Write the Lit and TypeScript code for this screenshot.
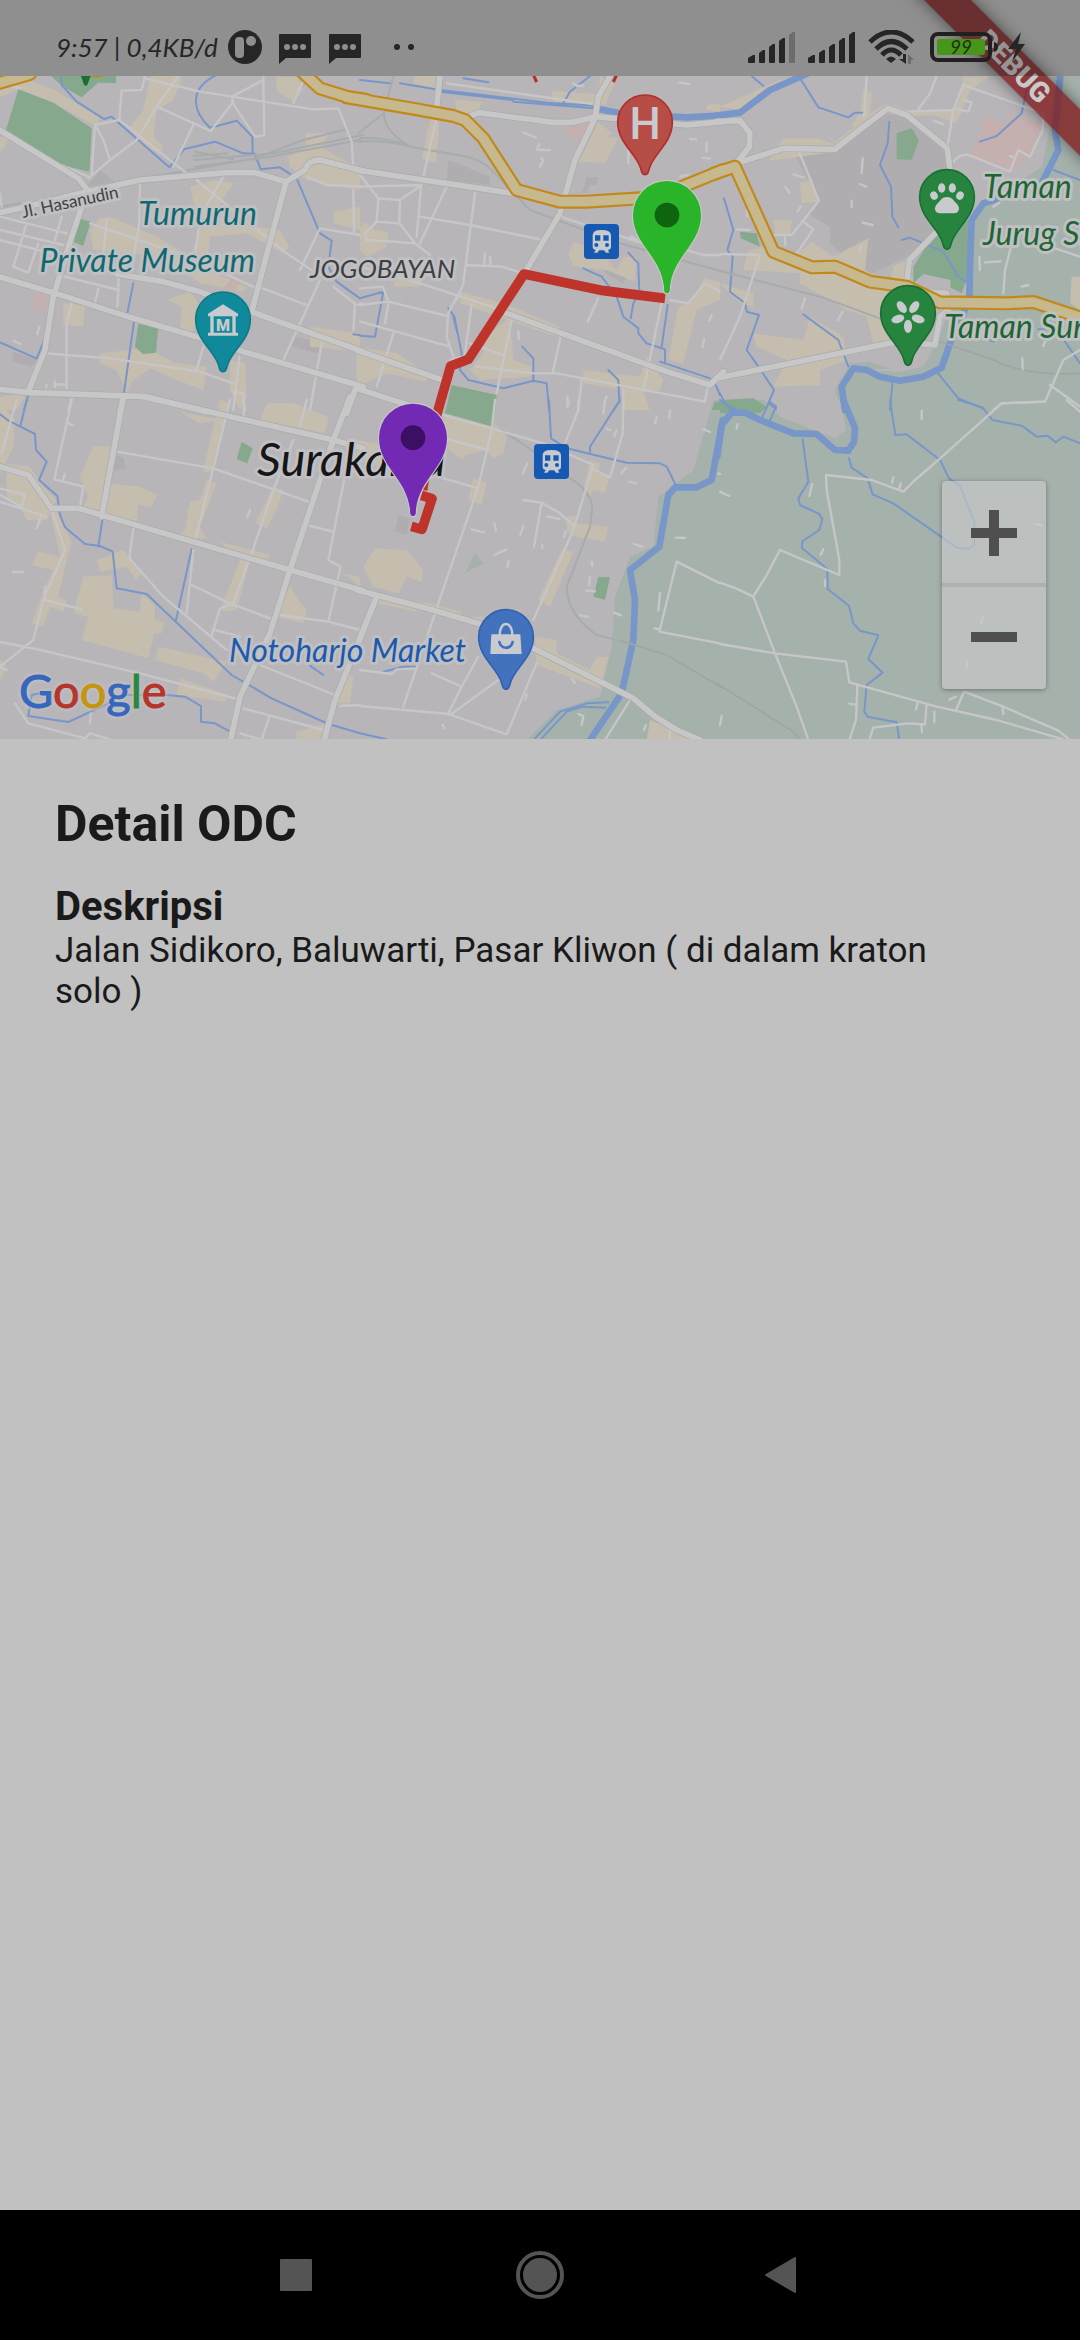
import { LitElement, html, svg, css } from "lit";
import { customElement } from "lit/decorators.js";

type LayerName =
  | "wetland" | "land" | "works" | "built" | "health" | "park"
  | "stream" | "river" | "rail" | "boundary" | "minor" | "major" | "highway";

interface Tile {
  x: number;
  y: number;
  paths: Partial<Record<LayerName, string>>;
}

/* Geometry is stored per tile, in tile units; three units make one map pixel. */
const TILES: Tile[] = [
  {
    x: 0, y: 0,
    paths: {
      works: "M300 300L345 335L260 350Z M40 845L110 870L95 890L38 875Z M880 800L965 815L955 850L875 830Z",
      built:
        "M-10 40L60 22L165 60L300 145L290 170L165 100L60 58L-10 85Z M0 200L35 195L0 250Z M450 18L550 18L520 90L470 120L460 200L490 230L480 255L410 210L390 170L430 120Z M300 445L330 440L470 500L570 560L600 480L570 350L640 330L700 340L660 400L700 460L840 480L868 530L850 550L740 490L630 500L620 600L740 650L730 665L600 640L500 560L280 540L270 480Z M865 260L920 230L915 190L990 190L960 230L1030 270L1080 290L1080 360L920 330L870 290Z M830 20L890 20L910 60L880 95L830 60Z M1000 425L1080 410L1080 480L1000 460Z M190 700L255 705L250 770L190 765Z M500 690L570 665L610 720L570 800L540 780L545 710Z M300 850L440 835L530 880L620 890L610 960L530 930L450 895L400 930L380 970L350 900L300 880Z M690 870L735 880L740 980L720 1020L690 960Z M930 770L1080 790L1080 845L930 830Z M0 980L80 970L50 1020L0 1020Z",
      health: "M105 665L145 680L140 725L103 715Z M690 630L715 620L720 640L700 670L670 655Z",
      park: "M55 58L160 98L275 175L268 305L185 285L18 180Z M153 18L348 18L348 40L295 38L245 82L190 50Z M235 445L272 455L250 527L217 515Z M415 762L475 772L468 848L428 852L405 830Z",
      stream:
        "M182 18L185 45L230 95L312 147L335 140L508 292L552 238L645 215L730 250L765 252L782 298L840 292L890 325L960 490L995 512L985 590L1010 635L1080 685 M660 10Q590 40 588 90Q585 130 630 173L710 152L757 200L758 252 M400 640L380 740L402 755L372 968 M-5 815L110 866L132 812 M85 975L72 1020 M1060 793L1080 795",
      rail: "M430 325L765 265L910 210L1040 178 M585 270L820 250L1090 195 M585 245L700 268 M585 290L800 262L1080 210 M580 258L680 250 M-10 412L60 400",
      minor:
        "M435 18L425 60L365 62L358 150L560 310 M535 18L470 110L410 210L330 270L265 325 M-5 35L60 55 M435 25L600 65L940 118L1015 115L1055 215L1060 290 M285 165L358 150 M285 165L275 310 M285 165L310 210L330 270 M185 285L265 320 M790 18L793 195L765 200L695 95 M790 30L695 80L700 95L632 183L470 110 M580 165L520 290 M915 18L880 100 M420 345L418 460L395 600 M320 450L310 550 M270 460L520 545L650 600L770 655 M590 330L650 380L860 550L935 600 M670 320L600 440L580 600 M0 440L200 490 M0 480L190 525 M0 510L190 560 M80 460L40 590L85 608L115 520 M185 440L165 510 M175 615L355 660L355 620 M295 655L285 700 M355 660L352 710 M780 652L920 705 M960 630L850 870 M960 475L900 600 M960 475L1080 495 M1060 360L1062 490 M920 320L980 345L1080 350 M215 700L200 760L200 955 M140 850L330 865L600 905L700 940 M610 830L590 900 M718 860L700 1020 M700 965L730 970L735 1020 M215 985L205 1020 M1065 700L1060 780 M965 820L930 1020 M1000 650L1070 705L1085 700 M118 770L112 792 M40 812L62 822 M140 945L138 952 M165 935L165 952 M165 943L195 943 M0 370L5 410",
      major:
        "M-10 175L235 325L262 360 M-10 430L100 405L260 365L420 330L680 308L765 308L858 335L915 300Q925 270 960 270L1090 303 M858 335L755 725 M262 360L215 500L160 680L135 840L85 965 M-10 618L160 668L390 742L590 800L730 845L1090 950 M350 612L490 635L600 665L780 735L1090 845 M-10 957L90 968L440 980L620 1025 M370 985L360 1025 M1065 960L1040 1030",
      highway: "M-20 44L90 12 M900 0L960 55L1040 80L1100 90",
    },
  },
  {
    x: 1080, y: 0,
    paths: {
      works: "M265 270L390 320L390 345L260 330Z M680 320L715 322L710 345L690 345L680 370L665 368Z M740 590L800 620L790 640L735 610Z",
      built:
        "M165 18L230 18L225 55L160 40Z M285 90L365 95L355 125L330 145L290 120Z M215 130L240 140L228 280L185 265Z M575 62L740 75L740 105L580 95Z M720 18L765 40L740 95L715 95Z M715 155L755 190L740 200L775 205L735 280L690 275L655 280Z M640 515L720 545L770 600L790 560L830 560L825 635L740 600L640 590L625 550Z M1030 625L1080 635L1080 690L1010 720L970 880L925 870L955 710L1000 690Z M15 455L45 480L85 485L80 530L20 560L0 540L0 470Z M120 600L190 620L180 650L100 650Z M300 665L430 700L600 770L590 800L300 700Z M380 800L450 740L460 870L520 890L510 920L360 930L330 900L370 850Z M-10 830L110 850L205 910L200 935L80 910L-10 950Z M670 900L840 920L860 860L910 930L900 960L850 965L870 1020L790 1020L790 960L670 940Z M1040 105L1080 100L1080 125L1040 120Z",
      health: "M690 155L660 215L610 190L640 160Z",
      park: "M275 945L410 975L400 1070L255 1030Z M1065 995L1080 995L1080 1020L1055 1020Z",
      stream:
        "M0 30L90 40 M690 18L630 65L610 100 M310 25L385 37 M805 548L835 580L838 670L820 700L812 745 M670 595L725 620L770 680L790 740L835 775L835 790L860 820L915 838L915 880 M923 705L905 830 M0 685L70 665L45 800L0 797 M265 715L283 740L305 850L300 900L325 930L430 955L520 932L560 940L567 1020 M487 830L520 865L520 935 M745 900L775 930L778 995L760 1020 M1050 925L900 875 M1065 940L1080 975 M280 740L292 790 M120 40L240 60L560 98L720 108 M460 95L740 118 M240 65L460 90",
      river: "M720 118L790 132L980 142L1080 137",
      rail: "M100 18L72 130Q70 180 150 230 M72 130L-5 190 M0 205Q80 200 150 230L330 262Q370 275 390 295L510 420L660 475L780 520L1090 605 M-5 215Q80 210 150 230",
      minor:
        "M235 120L190 320 M260 40L580 85L720 105 M0 315L55 385L120 390L185 345L0 350 M55 390L50 455L15 490L20 510L100 515L165 520L210 555 M120 390L118 460L50 455 M118 460L165 520 M183 350L170 500 M180 440L330 465L540 508 M345 370L310 640L290 690 M260 350L180 520 M320 585L425 590L490 610 M0 590L180 640L440 725 M290 680L265 730L260 800L280 860 M70 655L85 695L0 705 M85 695L262 738 M85 700L75 760 M0 755L270 830 M100 790L50 950 M335 700L315 850 M330 820L430 855 M270 870L340 850 M455 750L410 970 M350 890L520 910L590 910L800 950L1035 995L1045 940 M603 795L578 910 M665 930L655 1020 M790 960L790 1020 M715 685L683 755 M905 700L850 960 M930 690L985 700L1035 640L1080 665 M600 440L850 520 M980 540L1030 555L1080 555 M375 550L372 585 M390 560L392 585 M0 655L70 650 M490 188L528 203 M538 222L530 238L550 240L570 240 M545 265L550 270L540 290 M805 240L805 280 M990 207L1008 208 M1040 218L1040 245 M1028 263L1050 266 M960 320L985 314 M958 38L988 42 M640 40L650 48L670 46 M475 785L477 808 M1055 735L1048 752 M1032 808L1028 832 M622 980L622 1010 M740 980L732 1000 M805 510L812 500L830 508",
      major:
        "M243 -10L230 110 M760 0L715 80L705 145L645 270L600 430L490 615 M325 140L355 128L580 157L640 157L705 140L980 165L1090 155 M-10 300L460 370 M440 730L920 905L1050 945L1090 905 M-10 840L260 935 M-10 955L190 1020",
      highway: "M-40 82L170 118L280 138L315 150L370 205L470 360L600 395L680 395L840 385L900 378L980 345L1090 300",
    },
  },
  {
    x: 2160, y: 0,
    paths: {
      wetland: "M1005 18L1080 18L1080 1020L360 1020L345 960L390 880L450 875L540 905L610 890L660 800L690 700L740 680L750 590L760 420L800 400L965 290L985 200Z",
      works: "M220 250L350 240L480 120L560 130L690 240L700 300L660 480L560 560L500 590L440 620L330 520L330 470L260 430L300 390Z",
      built:
        "M0 110L90 70L180 30L240 18L150 55L60 120Z M430 55L455 70L450 130L500 100L560 120L700 120L720 90L730 20L810 18L750 60L710 160L640 135L560 140L500 130L430 165L390 170L420 130Z M150 265L190 205L290 205L350 225L320 195L345 215L430 150L350 245L150 272Z M240 340L270 330L300 395L245 400Z M160 450L215 450L210 495L165 490Z M85 540L130 530L220 560L275 515L340 560L445 505L435 600L510 640L520 590L560 570L580 640L520 670L520 810L460 820L440 740L380 720L240 640L240 610L70 600Z M0 640L100 670L100 710L60 700Z M100 790L250 810L270 740L370 800L380 870L300 900L300 945L160 950L200 870L110 830Z M1055 620L1080 620L1080 720L1050 700Z",
      health: "M785 150L800 140L860 160L865 130L970 160L950 200L930 260L860 310L750 250L780 200Z",
      park: "M530 190L575 175L597 210L575 270L530 268Z M60 485L110 490L120 530L62 505Z M580 590L650 480L745 450L750 600L725 670L610 612L580 640Z M0 990L100 985L140 1010L120 1030L0 1030Z",
      land: "M610 612L692 630L690 665L605 645Z M400 900L540 895L640 800L620 840L600 890L540 905Z",
      stream:
        "M95 18L130 48 M240 25L295 112L385 142L405 128L430 128 M508 155L503 220L480 285L513 350L517 440L535 472 M780 215L830 198L905 130L920 60 M545 510L570 503L670 545L715 620L745 640 M12 385L40 480L22 540L38 560L30 665L75 700L80 725L117 735L80 840L115 890L162 960L145 1000L168 1018 M250 733L355 810L385 890 M650 905L715 985L790 1015 M517 940L510 1020 M1035 815L1080 880 M1000 300L1080 330 M0 970L15 1000L50 1020 M800 805L820 815 M955 778L975 778",
      river: "M-10 137L60 128L150 60L260 12 M1022 10L1005 180L1015 240L985 300 L965 340L790 400L755 450L750 590L748 680L720 760L690 820L665 893L610 920L540 932L480 920L440 900L400 895L365 950L375 1020",
      rail: "M-10 600L300 680L480 745",
      boundary: "M660 815L820 870Q920 920 1090 910",
      minor:
        "M650 18L630 70L590 125 M440 18L432 140 M560 125L700 120L730 45L970 130L968 180L930 260L895 240L870 305L760 260Q720 240 690 290 M735 90L755 98L745 125L700 115 M700 120L682 230 M235 240L297 392L215 495L150 495 M250 455L280 478L230 550 M0 552L120 555L60 740L0 870 M873 530L855 600L850 670 M990 530L1080 560 M1080 840L1030 870L975 995L845 1000L820 1020 M990 945L1080 1010 M778 560L780 600 M795 577L842 574 M428 265L425 310 M420 342L438 350 M395 392L395 410 M428 458L458 465 M220 313L250 322 M196 350L208 368 M242 410L233 424 M640 152L670 162 M255 685L245 715 M368 725L353 750 M905 650L925 645 M907 865L908 898 M970 828L975 815 M820 410L838 398 M424 530L418 548 M870 258L880 262 M50 478L90 480 M80 420L82 440 M195 500L196 525",
      major:
        "M-10 155L60 152L90 190L88 230L50 280L190 235L345 238L430 170L505 115L560 135L682 235L690 300 M650 485L568 570L560 640 M-10 925L530 815 M600 665L680 670L685 720L660 740L645 825L600 820",
      highway: "M-20 312L45 290L160 545L275 592L345 590L450 635L560 650L660 697L860 700L940 696L1090 745",
    },
  },
  {
    x: 0, y: 990,
    paths: {
      works: "M350 165L372 175L375 205L340 212Z",
      built:
        "M0 10L45 60L40 140L0 220Z M20 190L90 200L130 260L170 300L140 360L80 360L60 320L20 300Z M150 330L180 340L215 430L200 480L175 590L200 600L190 635L150 620L130 680L95 670L135 560L160 510L95 495L115 455L180 470Z M280 137L330 140L320 250L420 260L472 285L455 320L415 315L410 365L240 340L265 290L240 230Z M290 480L370 450L425 520L410 540L380 500L300 515Z M250 530L335 525L340 625L420 635L425 580L465 615L465 660L493 665L485 700L462 700L445 775L245 720L265 650L220 640Z M475 740L680 785L640 845L610 820L465 780Z M540 835L685 885L675 905L530 885Z M660 0L690 10L640 220L610 215L630 120Z M620 240L650 250L600 380L620 415L510 420L555 390L570 305L600 300Z M800 10L880 10L985 50L975 100L780 60Z M820 260L850 270L830 330L800 385L765 370Z M660 425L810 465L800 485L750 480L710 630L670 635L665 620L720 480Z M870 555L895 600L920 630L910 670L830 650Z M1040 820L1060 830L1050 910L1000 910Z M890 995L980 970L960 1020L890 1020Z M1080 530L1030 520L1080 560Z M540 35L660 60L600 70Z M0 780L15 790L10 830L0 840Z",
      park: "M725 125L758 145L742 190L710 178Z",
      stream:
        "M80 0L62 75 M-10 35L25 62L62 80L105 102L108 150L140 185L117 240L172 288L180 345L195 382L255 432L300 438L338 455L350 565L440 582L695 825L815 895L985 972L1080 1000 M307 360L295 440 M575 447L527 665 M120 880L95 885L85 948L205 966L380 885L500 885L555 890L603 918L603 965L645 970L690 995 M930 797L970 825",
      minor:
        "M215 0L200 70L163 238L250 260L240 320 M200 68L218 76 M195 222L187 245 M0 265L75 285L65 320L0 285 M0 305L140 350L125 345L110 385 M50 0L5 160 M155 330L195 450L130 600L100 720L0 800L20 810 M135 560L135 600L245 628 M-5 725L100 745L420 820L705 895 M350 155L640 205L925 305 M690 0L640 205L588 410 M730 0L732 50 M920 0L900 80 M880 120L820 270L755 460 M745 485L700 610L660 625L635 705 M400 385L388 475L490 590L680 750 M580 450L560 640 M575 555L690 610L810 655 M645 690L720 710 M1040 200L985 480L1022 500L985 665 M930 378L1000 395 M840 645L985 665L1080 690 M780 795L1005 885 M730 925L970 990 M808 950L785 1020 M45 910L85 970L255 1015L270 1000L330 1018 M272 940L270 970 M38 516L68 516 M750 330L742 352 M720 1000L780 1018 M1020 918L1080 915",
      major:
        "M370 -10L305 350 M430 -10L990 118L1090 145 M-10 197L85 225L155 325L235 325L870 510L1090 572 M1050 -10L1000 120L870 510L810 700L720 890L690 1030 M1130 590L1070 740L1005 900L970 1030",
    },
  },
  {
    x: 1080, y: 990,
    paths: {
      wetland: "M1060 0L1080 0L1080 1020L500 1020L590 930L720 890L755 740L765 590L810 470L880 440L895 290L950 250L1000 210Z M345 460L372 490L315 520Z",
      works: "M115 345L150 355L140 405L105 395Z",
      built:
        "M250 40L395 80L400 65L440 110L430 160L400 175L380 150L315 165L310 180L265 150Z M340 235L380 248L365 315L325 300Z M45 445L140 450L190 510L185 545L140 530L115 580L40 560L10 500Z M190 605L305 635L300 650L190 625Z M330 650L400 650L380 670Z M690 180L720 190L715 220L750 225L735 280L700 270L690 290L670 270Z M620 350L650 345L650 370L745 380L735 425L650 410L620 395Z M605 450L640 455L570 620L535 600Z M525 710L590 720L590 760L690 810L710 770L745 770L720 865L530 795Z M870 960L1000 1010L1020 1030L860 1020Z M-10 120L100 140L50 200L-10 160Z M50 590L170 620L170 635L50 610Z",
      park: "M715 530L750 532L735 600L700 590Z",
      stream:
        "M567 0L573 115L620 145L800 188L900 190L920 200L947 255 M780 0L690 140L690 155 M70 815L130 800L170 800 M525 1015L600 935L680 910L745 907 M545 1015L620 935L670 920L735 923 M0 1000L80 1018",
      river: "M1088 60L1055 240L1010 262L945 262L925 285L898 440L810 510L825 600L820 720L785 880L690 1020",
      rail: "M430 95Q520 150 630 235Q690 270 697 320L690 380L620 560Q620 640 710 705L780 722",
      boundary: "M780 722L920 765L1090 865",
      minor:
        "M405 0L395 90L355 260L235 610L205 700L130 920 M250 45L550 130L700 195L695 210L640 390L520 660 M790 0L788 100L750 232L705 210 M655 0L655 30L615 130 M250 115L385 150 M250 235L355 265 M490 300L545 308L600 340L640 375 M545 308L522 440 M355 770L305 860L265 940 M0 918L265 942L440 1003L530 790 M415 840L270 945 M215 820L305 860 M0 810L95 822L110 808L170 805 M810 900L735 1020 M1080 550L950 485L898 695L1080 730 M900 578L895 632 M883 685L900 688 M335 388L372 397 M403 370L408 392 M490 378L481 405 M402 465L440 448 M446 484L442 502 M560 349L598 357 M502 190L489 220 M625 0L625 18 M735 0L730 40 M740 86L752 90 M770 90L763 108 M890 52L885 70 M930 30L928 55 M1030 88L1050 96 M808 245L828 250 M798 203L785 220 M695 485L697 498 M690 530L687 555 M678 571L705 574 M660 646L683 650 M762 638L783 646 M948 413L975 414 M822 432L848 440 M617 395L612 410 M500 882L496 898 M655 942L670 948L665 975 M858 975L852 990 M930 990L928 1015 M248 975L254 985 M637 838L645 848 M547 435L547 443 M1075 220L1080 222",
      major: "M-10 570L200 625L440 695L520 745L820 895L885 950L950 990L1020 1020 M50 590L-10 740",
    },
  },
  {
    x: 2160, y: 990,
    paths: {
      wetland: "M-10 0H1080V1020H-10Z",
      land: "M130 0L360 0L378 90L345 115L180 50Z",
      stream:
        "M0 0L45 38 M125 55L148 5L168 20L148 65 M248 118L265 245L235 295L240 315L298 342L307 358L298 390L248 423L245 443L322 507L323 567L387 617L400 670L420 692L475 706L445 777L488 818L440 855L433 935L443 950L530 967L538 1020 M387 175L395 203L443 235L458 283L520 310L710 443L745 447L763 435L763 365L720 258L687 235L660 180L560 103L526 105L510 0 M715 0L787 22L817 60L905 77L950 110L982 107L1008 127L1030 110L1080 130",
      river: "M-8 170L5 75L35 38L75 38L120 60L220 100L290 102L345 150L385 152L402 125L405 85L370 0",
      boundary: "M-10 850L220 995L240 1020",
      minor:
        "M975 5L845 10L655 180L585 240L550 275L455 240L318 225L320 270L340 380L358 480L358 525L180 450L140 525L100 590L48 565L0 548 M100 590L165 760L230 920L265 1020 M0 732L165 760L378 785L388 847L650 920L830 960L1030 1018 M412 857L408 960L388 1020 M620 912L615 973L565 970L460 983L448 1020 M708 930L732 875L850 920L1015 992L1050 1020 M1040 0L1080 35 M605 33L605 58 M520 232L516 248 M542 250L538 266 M276 253L268 288 M310 448L302 465 M315 540L315 558 M0 275L28 288 M53 72L50 85 M388 911L405 914 M593 908L588 928 M643 935L643 967 M604 978L606 996 M688 899L708 890 M848 925L850 942 M948 372L965 377 M788 653L782 672 M740 785L740 803 M5 948L0 975",
    },
  },
];

const PAINT: { from: LayerName; cls: string }[] = [
  { from: "wetland", cls: "wetland" },
  { from: "works", cls: "works" },
  { from: "built", cls: "built" },
  { from: "health", cls: "health" },
  { from: "park", cls: "park" },
  { from: "land", cls: "land" },
  { from: "stream", cls: "stream" },
  { from: "river", cls: "river" },
  { from: "rail", cls: "rail" },
  { from: "boundary", cls: "boundary" },
  { from: "minor", cls: "minor" },
  { from: "major", cls: "major-edge" },
  { from: "major", cls: "major" },
  { from: "highway", cls: "highway-edge" },
  { from: "highway", cls: "highway" },
];

const ROUTE =
  "M1995 685L1810 662L1572 612L1405 868L1352 888L1290 1105L1268 1260M1264 1276L1296 1286L1266 1378L1234 1369";

const POI_PIN =
  "M0 157C-8 157-10 150-13 138C-24 95-82 62-82 0A82 82 0 1 1 82 0C82 62 24 95 13 138C10 150 8 157 0 157Z";
const MARKER =
  "M0 235C-8 235-9 228-9 214C-20 120-102 88-102 0A102 102 0 1 1 102 0C102 88 20 120 9 214C9 228 8 235 0 235Z";

const station = (x: number, y: number) => svg`
  <g transform="translate(${x} ${y})">
    <rect width="105" height="105" rx="12" class="station"></rect>
    <path class="pale" d="M26 34Q26 18 52 18Q81 18 81 34V68Q81 76 72 78L76 86H66L60 79H46L40 86H30L35 78Q26 76 26 68Z"></path>
    <path class="station" d="M33 34H49V50H33Z M58 34H74V50H58Z"></path>
    <circle class="station" cx="37" cy="63" r="6"></circle>
    <circle class="station" cx="69" cy="63" r="6"></circle>
  </g>`;

@customElement("city-map")
export class CityMap extends LitElement {
  static styles = css`
    :host { display: block; position: relative; overflow: hidden; }
    .canvas { display: block; width: 100%; aspect-ratio: 1080 / 663; background: #b8b5b9; }
    .wetland { fill: #a5b2ab; }
    .land { fill: #b8b5b9; }
    .works { fill: #b0adb1; }
    .built { fill: #c5bdae; }
    .health { fill: #c4b0ae; }
    .park { fill: #86a98e; }
    .stream, .river, .rail, .boundary, .minor, .major, .major-edge, .highway, .highway-edge, .route {
      fill: none; stroke-linejoin: round; stroke-linecap: round;
    }
    .stream { stroke: #7896c8; stroke-width: 6; }
    .river { stroke: #7896c8; stroke-width: 20; }
    .rail { stroke: #a6abac; stroke-width: 6; }
    .boundary { stroke: #a0a4a5; stroke-width: 5; }
    .minor { stroke: #c6c6c8; stroke-width: 7; }
    .major-edge { stroke: #a9aaac; stroke-width: 21; }
    .major { stroke: #c7c7c7; stroke-width: 17; }
    .highway-edge { stroke: #c1891a; stroke-width: 42; }
    .highway { stroke: #c6b88f; stroke-width: 29; }
    .route { stroke: #be342a; stroke-width: 29; stroke-linecap: butt; }
    .station { fill: #1659b3; }
    .pale { fill: #c8cace; }
    .pale-line { fill: none; stroke: #c8cace; stroke-width: 7; }
    .pin { stroke-width: 5; }
    .museum { fill: #108a9b; stroke: #0e7a86; }
    .hospital { fill: #b64d47; stroke: #ae3028; }
    .garden { fill: #27843f; stroke: #1a7033; }
    .shop { fill: #4272bd; stroke: #2f62b2; }
    .shop-line { fill: none; stroke: #4272bd; stroke-width: 8; stroke-linecap: round; }
    .marker { stroke: #c4c8c4; stroke-width: 7; paint-order: stroke; }
    .start { fill: #2ab42a; }
    .start-dot { fill: #0f640f; }
    .end { fill: #7229b4; }
    .end-dot { fill: #3c0f64; }
    .label {
      font-family: Lato, "Open Sans", sans-serif; font-style: italic; font-size: 32px;
      paint-order: stroke; stroke: #c0bfc2; stroke-width: 6px; stroke-linejoin: round;
    }
    .teal { fill: #10686f; }
    .green { fill: #1b6633; }
    .blue { fill: #1b5aae; }
    .district { fill: #3c3f44; font-size: 26px; }
    .city { fill: #161618; font-size: 47px; }
    .street { fill: #3c3f44; font-size: 17px; font-style: normal; }
    .sign { font-family: Roboto, sans-serif; font-weight: 500; font-size: 44px; fill: #c8cace; text-anchor: middle; }
    .sign-small { font-size: 16px; font-weight: 900; }
    .brand {
      position: absolute; left: 19px; bottom: 21px; font-family: Lato, sans-serif; font-size: 47px; line-height: 56px;
      -webkit-text-stroke: 1px currentColor; color: #3567bd; text-decoration: none;
      text-shadow: 0 0 4px #c2c1c4, 0 0 4px #c2c1c4, 0 0 6px #c2c1c4;
    }
    .red { color: #b5352c; }
    .yellow { color: #c4960f; }
    .leaf { color: #27883f; }
    .zoom {
      position: absolute; right: 34px; bottom: 50px; width: 104px; display: flex; flex-direction: column;
      border-radius: 4px; overflow: hidden; box-shadow: 0 1px 5px rgba(0, 0, 0, 0.35);
    }
    .step {
      height: 104px; padding: 0; border: 0; display: flex; align-items: center; justify-content: center;
      background: rgba(201, 202, 204, 0.62); color: #4f4f4f; box-shadow: inset 0 -2px #aeb1b0;
    }
    .step + .step { box-shadow: inset 0 2px #aeb1b0; }
  `;

  render() {
    return html`
      <svg class="canvas" viewBox="0 0 1080 663" preserveAspectRatio="xMidYMid slice" role="img" aria-label="Surakarta">
        <g transform="translate(0 -6) scale(0.333333)">
          ${PAINT.map((layer) =>
            TILES.filter((t) => t.paths[layer.from]).map(
              (t) => svg`<path class=${layer.cls} transform="translate(${t.x} ${t.y})" d=${t.paths[layer.from]!}></path>`
            )
          )}
          <path d="M1598 10L1610 36M1852 10L1840 36" stroke="#ae3028" stroke-width="9"></path>
          <ellipse cx="290" cy="14" rx="24" ry="9" fill="#c1891a"></ellipse>
          <path d="M240 10H275L262 44Q257 50 252 44Z" fill="#1a7033"></path>
        </g>

        <text class="label street" transform="translate(23 142) rotate(-12)">Jl. Hasanudin</text>
        <text class="label teal" x="257" y="149" text-anchor="end">Tumurun</text>
        <text class="label teal" x="255" y="196" text-anchor="end">Private Museum</text>
        <text class="label district" x="310" y="202">JOGOBAYAN</text>
        <text class="label city" x="257" y="400">Surakarta</text>
        <text class="label blue" x="229" y="586">Notoharjo Market</text>
        <text class="label green" x="983" y="122">Taman</text>
        <text class="label green" x="983" y="169">Jurug Su</text>
        <text class="label green" x="944" y="262">Taman Sur</text>

        <g transform="translate(0 -6) scale(0.333333)">
          ${station(1752, 462)} ${station(1602, 1122)}
          <path class="route" d=${ROUTE}></path>

          <g transform="translate(669 748)">
            <path class="pin museum" d=${POI_PIN}></path>
            <path class="pale" d="M0 -45L45 -17V-9H-45V-17Z M-38 -9H-28V42H-38Z M28 -9H38V42H28Z M-45 40H45V49H-45Z"></path>
          </g>
          <g transform="translate(1935 157)"><path class="pin hospital" d=${POI_PIN}></path></g>
          <g transform="translate(2841 381)">
            <path class="pin garden" d=${POI_PIN}></path>
            <ellipse class="pale" cx="-39" cy="-4" rx="11" ry="13" transform="rotate(-25 -39 -4)"></ellipse>
            <ellipse class="pale" cx="-16" cy="-27" rx="11" ry="14"></ellipse>
            <ellipse class="pale" cx="16" cy="-27" rx="11" ry="14"></ellipse>
            <ellipse class="pale" cx="39" cy="-4" rx="11" ry="13" transform="rotate(25 39 -4)"></ellipse>
            <path class="pale" d="M0 0C16 0 18 10 28 19C42 32 36 49 22 49H-22C-36 49 -42 32 -28 19C-18 10 -16 0 0 0Z"></path>
          </g>
          <g transform="translate(2724 729)">
            <path class="pin garden" d=${POI_PIN}></path>
            ${[36, 108, 180, 252, 324].map(
              (a) => svg`<ellipse class="pale" cx="0" cy="-24" rx="12" ry="20" transform="translate(0 8) rotate(${a}) translate(0 -8)"></ellipse>`
            )}
            <circle cx="0" cy="8" r="11" fill="#27843f"></circle>
          </g>
          <g transform="translate(1518 1701)">
            <path class="pin shop" d=${POI_PIN}></path>
            <path class="pale" d="M-44 -8H43L47 51H-47Z"></path>
            <path class="pale-line" d="M-19 -6C-19 -50 19 -50 19 -6"></path>
            <path class="shop-line" d="M-20 15C-14 38 14 38 20 15"></path>
          </g>
          <g transform="translate(2001 435)">
            <path class="marker start" d=${MARKER}></path><circle class="start-dot" r="37"></circle>
          </g>
          <g transform="translate(1239 1103)">
            <path class="marker end" d=${MARKER}></path><circle class="end-dot" r="37"></circle>
          </g>
        </g>
        <text class="sign" x="645" y="63">H</text>
        <text class="sign sign-small" x="223" y="255">M</text>
      </svg>
      <a class="brand" href="#google">G<span class="red">o</span><span class="yellow">o</span>g<span class="leaf">l</span><span class="red">e</span></a>
      <div class="zoom">
        <button class="step" aria-label="Zoom in">
          <svg width="46" height="46" viewBox="0 0 46 46"><path d="M18 0h10v18h18v10H28v18H18V28H0V18h18z" fill="currentColor"></path></svg>
        </button>
        <button class="step" aria-label="Zoom out">
          <svg width="46" height="46" viewBox="0 0 46 46"><path d="M0 18h46v10H0z" fill="currentColor"></path></svg>
        </button>
      </div>
    `;
  }
}

const chat = html`<svg width="34" height="34" viewBox="0 0 34 34">
  <path fill="#262626" d="M2 4H32Q33 4 33 5V27Q33 28 32 28H8L1 34V5Q1 4 2 4Z"></path>
  <g fill="#8f8f8f"><circle cx="9" cy="17" r="3"></circle><circle cx="17" cy="17" r="3"></circle><circle cx="25" cy="17" r="3"></circle></g>
</svg>`;

const signal = (last: string) => html`<svg width="48" height="34" viewBox="0 0 48 34">
  <g fill="#262626">
    <path d="M0 32V28L5 25H7V32Q7 33 6 33H1Q0 33 0 32Z"></path>
    <path d="M11 32V23L15 20H17V32Q17 33 16 33H12Q11 33 11 32Z"></path>
    <path d="M21 32V17L25 14H27V32Q27 33 26 33H22Q21 33 21 32Z"></path>
    <path d="M31 32V11L35 8H37V32Q37 33 36 33H32Q31 33 31 32Z"></path>
  </g>
  <path class=${last} d="M41 32V5L45 2H47V32Q47 33 46 33H42Q41 33 41 32Z"></path>
</svg>`;

@customElement("status-bar")
export class StatusBar extends LitElement {
  static styles = css`
    :host {
      display: flex; justify-content: space-between; height: 58px; padding: 18px 54px 0 56px;
      background: rgba(0, 0, 0, 0.26); color: #262626;
    }
    .group { display: flex; align-items: center; }
    .clock {
      min-width: 162px; margin-right: 10px; white-space: nowrap;
      font-family: Lato, sans-serif; font-style: italic; font-size: 26px; line-height: 34px;
    }
    .notes { display: flex; gap: 16px; }
    .dots { margin-left: 31px; }
    .radio { display: flex; gap: 12px; margin-right: 15px; }
    .bolt { margin-left: 9px; }
    .on { fill: #262626; }
    .off { fill: #6c6c6c; }
    .charge { font-family: Lato, sans-serif; font-style: italic; font-size: 19px; fill: #1f2f12; }
  `;

  render() {
    return html`
      <div class="group">
        <span class="clock">9:57 | 0,4KB/d</span>
        <div class="notes">
          <svg width="34" height="34" viewBox="0 0 34 34">
            <circle cx="17" cy="17" r="17" fill="#262626"></circle>
            <rect x="7" y="7" width="9" height="21" rx="4" fill="#8f8f8f"></rect>
            <circle cx="23" cy="11" r="5" fill="#8f8f8f"></circle>
          </svg>
          ${chat} ${chat}
        </div>
        <svg class="dots" width="22" height="8" viewBox="0 0 22 8"><circle class="on" cx="4" cy="4" r="3"></circle><circle class="on" cx="18" cy="4" r="3"></circle></svg>
      </div>
      <div class="group">
        <div class="radio">
          ${signal("off")} ${signal("on")}
          <svg width="47" height="34" viewBox="0 0 47 34">
            <g fill="none" stroke="#262626" stroke-width="5">
              <path d="M2 12Q23 -8 45 12"></path><path d="M8 19Q23 4 39 19"></path><path d="M14 25Q23 15 33 25"></path>
            </g>
            <path class="on" d="M18 29Q23 24 28 29L23 33Z"></path>
            <path class="on" d="M35 24H38V34L31 29H35Z"></path>
            <path class="off" d="M40 34V24L46 30H43V34Z"></path>
          </svg>
        </div>
        <svg width="69" height="30" viewBox="0 0 69 30">
          <rect x="2" y="2" width="58" height="26" rx="6" fill="none" stroke="#202020" stroke-width="4"></rect>
          <rect x="7" y="7" width="48" height="16" rx="2" fill="#47961a"></rect>
          <path d="M64 10Q68 11 68 15Q68 19 64 20Z" fill="#202020"></path>
          <text class="charge" x="31" y="22" text-anchor="middle">99</text>
        </svg>
        <svg class="bolt" width="18" height="30" viewBox="0 0 18 30"><path class="on" d="M13 0L0 17H8L4 30L17 12H10Z"></path></svg>
      </div>
    `;
  }
}

@customElement("app-root")
export class AppRoot extends LitElement {
  static styles = css`
    :host { display: block; font-family: Roboto, sans-serif; color: #1a1a1a; }
    .screen { position: relative; display: flex; flex-direction: column; min-height: 100vh; background: #c1c1c1; overflow: hidden; }
    .bar { position: relative; z-index: 2; }
    .corner { position: absolute; top: 0; right: 0; width: 200px; height: 200px; overflow: hidden; z-index: 1; pointer-events: none; }
    .ribbon {
      position: absolute; top: 50px; right: -64px; width: 260px; text-align: center; transform: rotate(45deg);
      background: rgba(125, 20, 22, 0.75); box-shadow: 0 0 16px rgba(0, 0, 0, 0.5);
      color: #c9c9c9; font-size: 28px; line-height: 33px; font-weight: 900;
    }
    .detail { flex: 1; padding: 56px 96px 40px 55px; }
    .title { margin: 0 0 30px; font-size: 50px; line-height: 58px; font-weight: 700; }
    .heading { margin: 0; font-size: 40px; line-height: 47px; font-weight: 700; }
    .text { margin: 0; font-size: 35px; line-height: 41px; }
    .nav { display: flex; justify-content: center; height: 130px; background: #000; }
    .key { flex: 0 1 244px; padding: 0; border: 0; background: none; display: flex; align-items: center; justify-content: center; }
  `;

  render() {
    return html`
      <div class="screen">
        <status-bar class="bar"></status-bar>
        <city-map></city-map>
        <div class="corner"><div class="ribbon">DEBUG</div></div>
        <main class="detail">
          <h1 class="title">Detail ODC</h1>
          <h2 class="heading">Deskripsi</h2>
          <p class="text">Jalan Sidikoro, Baluwarti, Pasar Kliwon ( di dalam kraton solo )</p>
        </main>
        <nav class="nav">
          <button class="key" aria-label="Recent apps">
            <svg width="50" height="50" viewBox="0 0 50 50"><rect x="9" y="9" width="32" height="32" rx="1" fill="#545454"></rect></svg>
          </button>
          <button class="key" aria-label="Home">
            <svg width="50" height="50" viewBox="0 0 50 50"><circle cx="25" cy="25" r="22" fill="none" stroke="#545454" stroke-width="4"></circle><circle cx="25" cy="25" r="17" fill="#545454"></circle></svg>
          </button>
          <button class="key" aria-label="Back">
            <svg width="50" height="50" viewBox="0 0 50 50"><path d="M36 8V42L7 25Z" fill="#545454" stroke="#545454" stroke-width="2" stroke-linejoin="round"></path></svg>
          </button>
        </nav>
      </div>
    `;
  }
}
